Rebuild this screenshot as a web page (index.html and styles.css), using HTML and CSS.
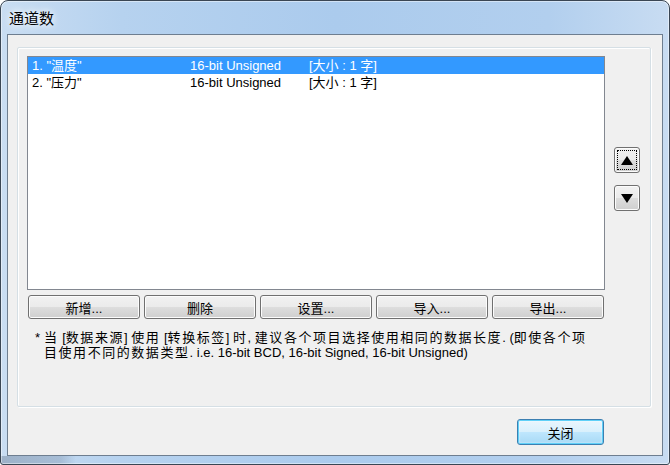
FILE: index.html
```html
<!DOCTYPE html>
<html lang="zh-CN">
<head>
    <meta charset="UTF-8">
    <meta name="viewport" content="width=device-width, initial-scale=1.0">
    <title>通道数</title>
    <link rel="stylesheet" href="styles.css">
</head>
<body>
    <div class="window">
        <div class="title-bar">
            <span class="title">通道数</span>
        </div>

        <div class="client">
            <div class="group-box">
                <div class="left-col">
                    <div class="list-box">
                        <div class="list-row selected">
                            <span>1. "温度"</span>
                            <span>16-bit Unsigned</span>
                            <span>[大小 : 1 字]</span>
                        </div>
                        <div class="list-row">
                            <span>2. "压力"</span>
                            <span>16-bit Unsigned</span>
                            <span>[大小 : 1 字]</span>
                        </div>
                    </div>

                    <div class="button-row">
                        <button class="btn">新增...</button>
                        <button class="btn">删除</button>
                        <button class="btn">设置...</button>
                        <button class="btn">导入...</button>
                        <button class="btn">导出...</button>
                    </div>

                    <!-- CJK runs in the note use a wider pitch -->
                    <div class="note">
                        <span class="star">*</span>
                        <p><span class="zh">当</span> [<span class="zh">数据来源</span>] <span class="zh">使用</span> [<span class="zh">转换标签</span>] <span class="zh">时</span>, <span class="zh">建议各个项目选择使用相同的数据长度</span>. (<span class="zh">即使各个项</span><br><span class="zh">目使用不同的数据类型</span>. i.e. 16-bit BCD, 16-bit Signed, 16-bit Unsigned)</p>
                    </div>
                </div>

                <div class="side-buttons">
                    <button class="btn arrow-btn focused">
                        <span class="focus-rect">
                            <svg width="12" height="9" viewBox="0 0 12 9"><polygon points="6,0 12,9 0,9" fill="#000"/></svg>
                        </span>
                    </button>
                    <button class="btn arrow-btn">
                        <svg width="12" height="9" viewBox="0 0 12 9"><polygon points="0,0 12,0 6,9" fill="#000"/></svg>
                    </button>
                </div>
            </div>

            <div class="footer">
                <button class="btn default-btn">关闭</button>
            </div>
        </div>
    </div>
</body>
</html>
```

FILE: styles.css
```css
body {
    margin: 0;
    padding: 0;
    font-family: "Liberation Sans", "Noto Sans CJK SC", sans-serif;
    font-size: 13px;
    color: #000;
    background-color: #fff;
}

/* Aero frame */
.window {
    width: 670px;
    height: 465px;
    box-sizing: border-box;
    border: 1px solid #3a4654;
    border-radius: 8px 8px 3px 3px;
    padding: 0 6px 8px 6px;
    display: flex;
    flex-direction: column;
    background:
        linear-gradient(90deg, rgba(120, 140, 165, 0.55) 0, rgba(120, 140, 165, 0.35) 60px, rgba(120, 140, 165, 0) 75px) bottom left / 100% 8px no-repeat,
        linear-gradient(90deg, #c9ddf2 0%, #b6d2ef 18%, #abcbed 50%, #b2cfee 82%, #c8dcf2 100%);
    box-shadow: inset 0 0 0 1px rgba(255, 255, 255, 0.45);
}

.title-bar {
    height: 33px;
    display: flex;
    align-items: center;
    padding-left: 2px;
}

.title {
    font-family: "Noto Sans CJK SC", sans-serif;
    font-size: 15px;
    text-shadow: 0 0 6px rgba(255, 255, 255, 0.9), 0 0 10px rgba(255, 255, 255, 0.8);
}

.client {
    flex: 1;
    border: 1px solid #6e7e90;
    background-color: #f0f0f0;
    padding: 12px 11px 0 9px;
    display: flex;
    flex-direction: column;
}

.group-box {
    height: 360px;
    box-sizing: border-box;
    border: 1px solid #d5dfe5;
    border-radius: 2px;
    box-shadow: inset 1px 1px 0 #fff, 1px 1px 0 #fff;
    padding: 8px 0 0 9px;
    display: flex;
}

.left-col {
    width: 578px;
    display: flex;
    flex-direction: column;
}

.list-box {
    height: 234px;
    box-sizing: border-box;
    border: 1px solid #828790;
    background-color: #fff;
}

.list-row {
    height: 17px;
    display: grid;
    grid-template-columns: 158px 119px 1fr;
    align-items: center;
    padding-left: 4px;
    line-height: 17px;
    white-space: nowrap;
}

.list-row.selected {
    background-color: #3399ff;
    color: #fff;
}

.button-row {
    display: flex;
    gap: 4px;
    margin: 5px 0 0 1px;
}

.btn {
    font-family: inherit;
    font-size: 13px;
    color: #000;
    height: 24px;
    padding: 0;
    border: 1px solid #707070;
    border-radius: 3px;
    background: linear-gradient(#f2f2f2 0%, #ebebeb 48%, #dddddd 52%, #cfcfcf 100%);
    box-shadow: inset 0 0 0 1px #fcfcfc;
    cursor: pointer;
}

.button-row .btn {
    width: 112px;
}

.note {
    display: flex;
    margin: 11px 0 0 8px;
    line-height: 15px;
}

.star {
    width: 9px;
}

.note p {
    margin: 0;
    white-space: nowrap;
}

.zh {
    letter-spacing: 1.55px;
}

.side-buttons {
    display: flex;
    flex-direction: column;
    gap: 12px;
    margin-left: 9px;
    padding-top: 91px;
}

.arrow-btn {
    width: 26px;
    height: 26px;
    display: flex;
    justify-content: center;
    align-items: center;
}

.focus-rect {
    width: 20px;
    height: 20px;
    box-sizing: border-box;
    border: 1px dotted #000;
    display: flex;
    justify-content: center;
    align-items: center;
}

.footer {
    display: flex;
    justify-content: flex-end;
    padding: 12px 47px 0 0;
}

.default-btn {
    width: 87px;
    height: 26px;
    border-color: #3c7fb1;
    background: linear-gradient(#eaf6fd 0%, #d9f0fc 48%, #bee6fd 52%, #a7d9f5 100%);
    box-shadow: inset 0 0 0 1px #5fd0f8, inset 0 0 2px 1px rgba(255, 255, 255, 0.7);
}
```
